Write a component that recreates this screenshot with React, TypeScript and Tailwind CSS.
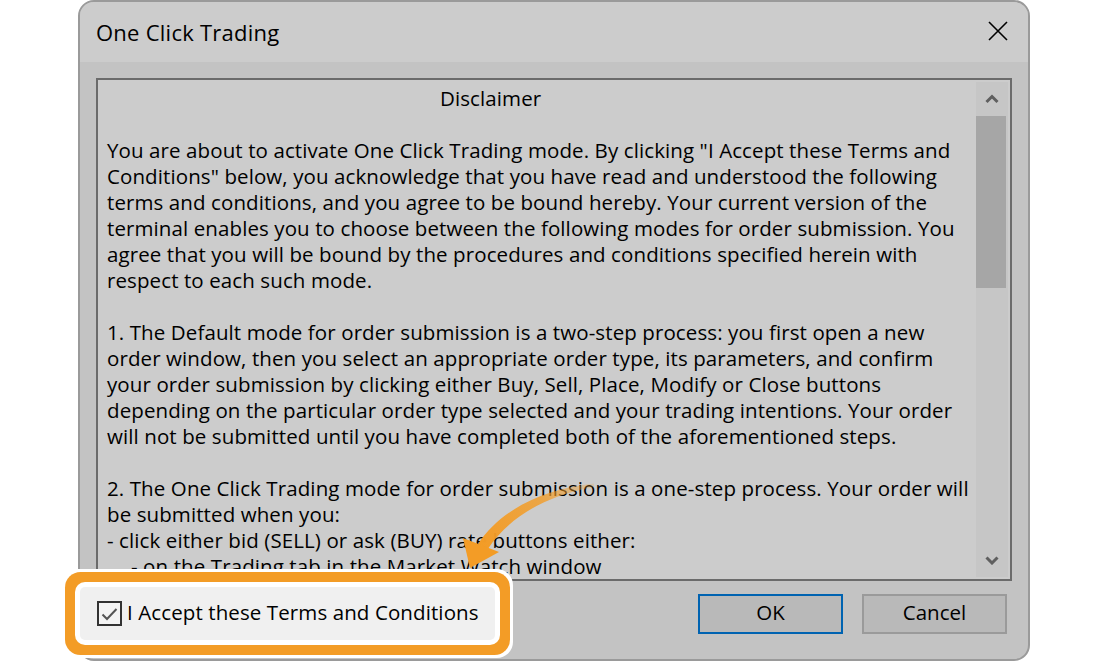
import React from "react";

const paragraphs: string[][] = [
  [
    'You are about to activate One Click Trading mode. By clicking "I Accept these Terms and',
    'Conditions" below, you acknowledge that you have read and understood the following',
    "terms and conditions, and you agree to be bound hereby. Your current version of the",
    "terminal enables you to choose between the following modes for order submission. You",
    "agree that you will be bound by the procedures and conditions specified herein with",
    "respect to each such mode.",
  ],
  [
    "1. The Default mode for order submission is a two-step process: you first open a new",
    "order window, then you select an appropriate order type, its parameters, and confirm",
    "your order submission by clicking either Buy, Sell, Place, Modify or Close buttons",
    "depending on the particular order type selected and your trading intentions. Your order",
    "will not be submitted until you have completed both of the aforementioned steps.",
  ],
  [
    "2. The One Click Trading mode for order submission is a one-step process. Your order will",
    "be submitted when you:",
    "- click either bid (SELL) or ask (BUY) rate buttons either:",
  ],
];

function ScrollArrow({ down = false }: { down?: boolean }) {
  return (
    <svg width="14" height="10" viewBox="0 0 14 10" aria-hidden>
      <path
        d={down ? "M1.5 2.5 L7 8 L12.5 2.5" : "M1.5 8 L7 2.5 L12.5 8"}
        fill="none"
        stroke="#5f5f5f"
        strokeWidth="3"
      />
    </svg>
  );
}

export default function App() {
  return (
    <div
      className="relative h-[662px] w-[1100px] overflow-hidden bg-white text-black"
      style={{ fontFamily: '"Segoe UI", "Open Sans", "Noto Sans", sans-serif' }}
    >
      <div className="ml-[78px] flex h-[661px] w-[952px] flex-col rounded-[16px] border-2 border-[#9a9a9a] bg-[#c3c3c3]">
        {/* title bar */}
        <div className="flex h-[60px] items-center justify-between rounded-t-[14px] bg-[#cccccc] pl-[16px] pr-[20px]">
          <span className="pt-[1px] text-[22px] tracking-[0.25px]">One Click Trading</span>
          <svg width="20" height="20" viewBox="0 0 20 20" aria-hidden className="mb-[2px]">
            <path d="M1 1 L19 19 M19 1 L1 19" stroke="#000" strokeWidth="1.6" />
          </svg>
        </div>

        <div className="flex flex-1 flex-col rounded-b-[14px] px-[16px] pt-[16px]">
          {/* disclaimer box */}
          <div className="flex h-[503px] border-2 border-[#6b6b6b] bg-[#cccccc]">
            <div className="flex-1 overflow-hidden pl-[9px] pt-[5px] text-[20.5px] leading-[26px] tracking-[0.1px]">
              <div className="pl-[333px]">Disclaimer</div>
              <div className="h-[26px]" />
              {paragraphs.map((lines, i) => (
                <div key={i} className={i < paragraphs.length - 1 ? "mb-[26px]" : ""}>
                  {lines.map((l) => (
                    <div key={l} className="whitespace-nowrap">
                      {l}
                    </div>
                  ))}
                  {i === paragraphs.length - 1 && (
                    <div className="whitespace-nowrap pl-[24px]">
                      - on the Trading tab in the Market Watch window
                    </div>
                  )}
                </div>
              ))}
            </div>
            <div className="my-[2px] mr-[2px] flex w-[32px] flex-col bg-[#c6c6c6]">
              <div className="flex h-[34px] items-center justify-center">
                <ScrollArrow />
              </div>
              <div className="mr-[2px] h-[172px] bg-[#a6a6a6]" />
              <div className="flex-1" />
              <div className="flex h-[34px] items-center justify-center">
                <ScrollArrow down />
              </div>
            </div>
          </div>

          {/* bottom row */}
          <div className="mt-[6px] flex items-center justify-between pr-[5px]">
            <label className="relative z-10 -ml-[16px] flex h-[53px] w-[415px] items-center gap-[5px] rounded-[5px] bg-[#f0f0f0] pl-[17px] text-[20.5px] tracking-[0.1px] shadow-[0_0_0_5px_#ffffff,0_0_0_15px_#f39c26,0_0_0_18px_#ffffff]">
              <span className="flex h-[25px] w-[25px] items-center justify-center border-2 border-[#333333] bg-[#f4f4f4]">
                <svg width="17" height="14" viewBox="0 0 17 14" aria-hidden>
                  <path d="M1.5 7.5 L6 12 L15.5 2" fill="none" stroke="#555555" strokeWidth="2" />
                </svg>
              </span>
              <span className="pb-[2px]">I Accept these Terms and Conditions</span>
            </label>
            <div className="flex gap-[19px]">
              <button
                type="button"
                className="h-[40px] w-[145px] border-2 border-[#0063b1] bg-[#b9b9b9] pb-[2px] text-[20.5px]"
              >
                OK
              </button>
              <button
                type="button"
                className="h-[40px] w-[145px] border-2 border-[#9a9a9a] bg-[#b9b9b9] pb-[2px] text-[20.5px]"
              >
                Cancel
              </button>
            </div>
          </div>
        </div>
      </div>

      {/* annotation arrow */}
      <svg
        className="pointer-events-none absolute left-0 top-0 z-20"
        width="1100"
        height="662"
        viewBox="0 0 1100 662"
        aria-hidden
      >
        <defs>
          <linearGradient id="arrowGrad" x1="594" y1="485" x2="482" y2="548" gradientUnits="userSpaceOnUse">
            <stop offset="0" stopColor="#f39c26" stopOpacity="0.2" />
            <stop offset="0.4" stopColor="#f39c26" stopOpacity="0.8" />
            <stop offset="1" stopColor="#f39c26" />
          </linearGradient>
        </defs>
        <path
          d="M594 483.5 C545 489 502 508 478 544 L487.5 549.5 C510 515 549 495 594 487 Z"
          fill="url(#arrowGrad)"
        />
        <path d="M470 568 L463 538 L499 552 Z" fill="#f39c26" />
      </svg>
    </div>
  );
}
